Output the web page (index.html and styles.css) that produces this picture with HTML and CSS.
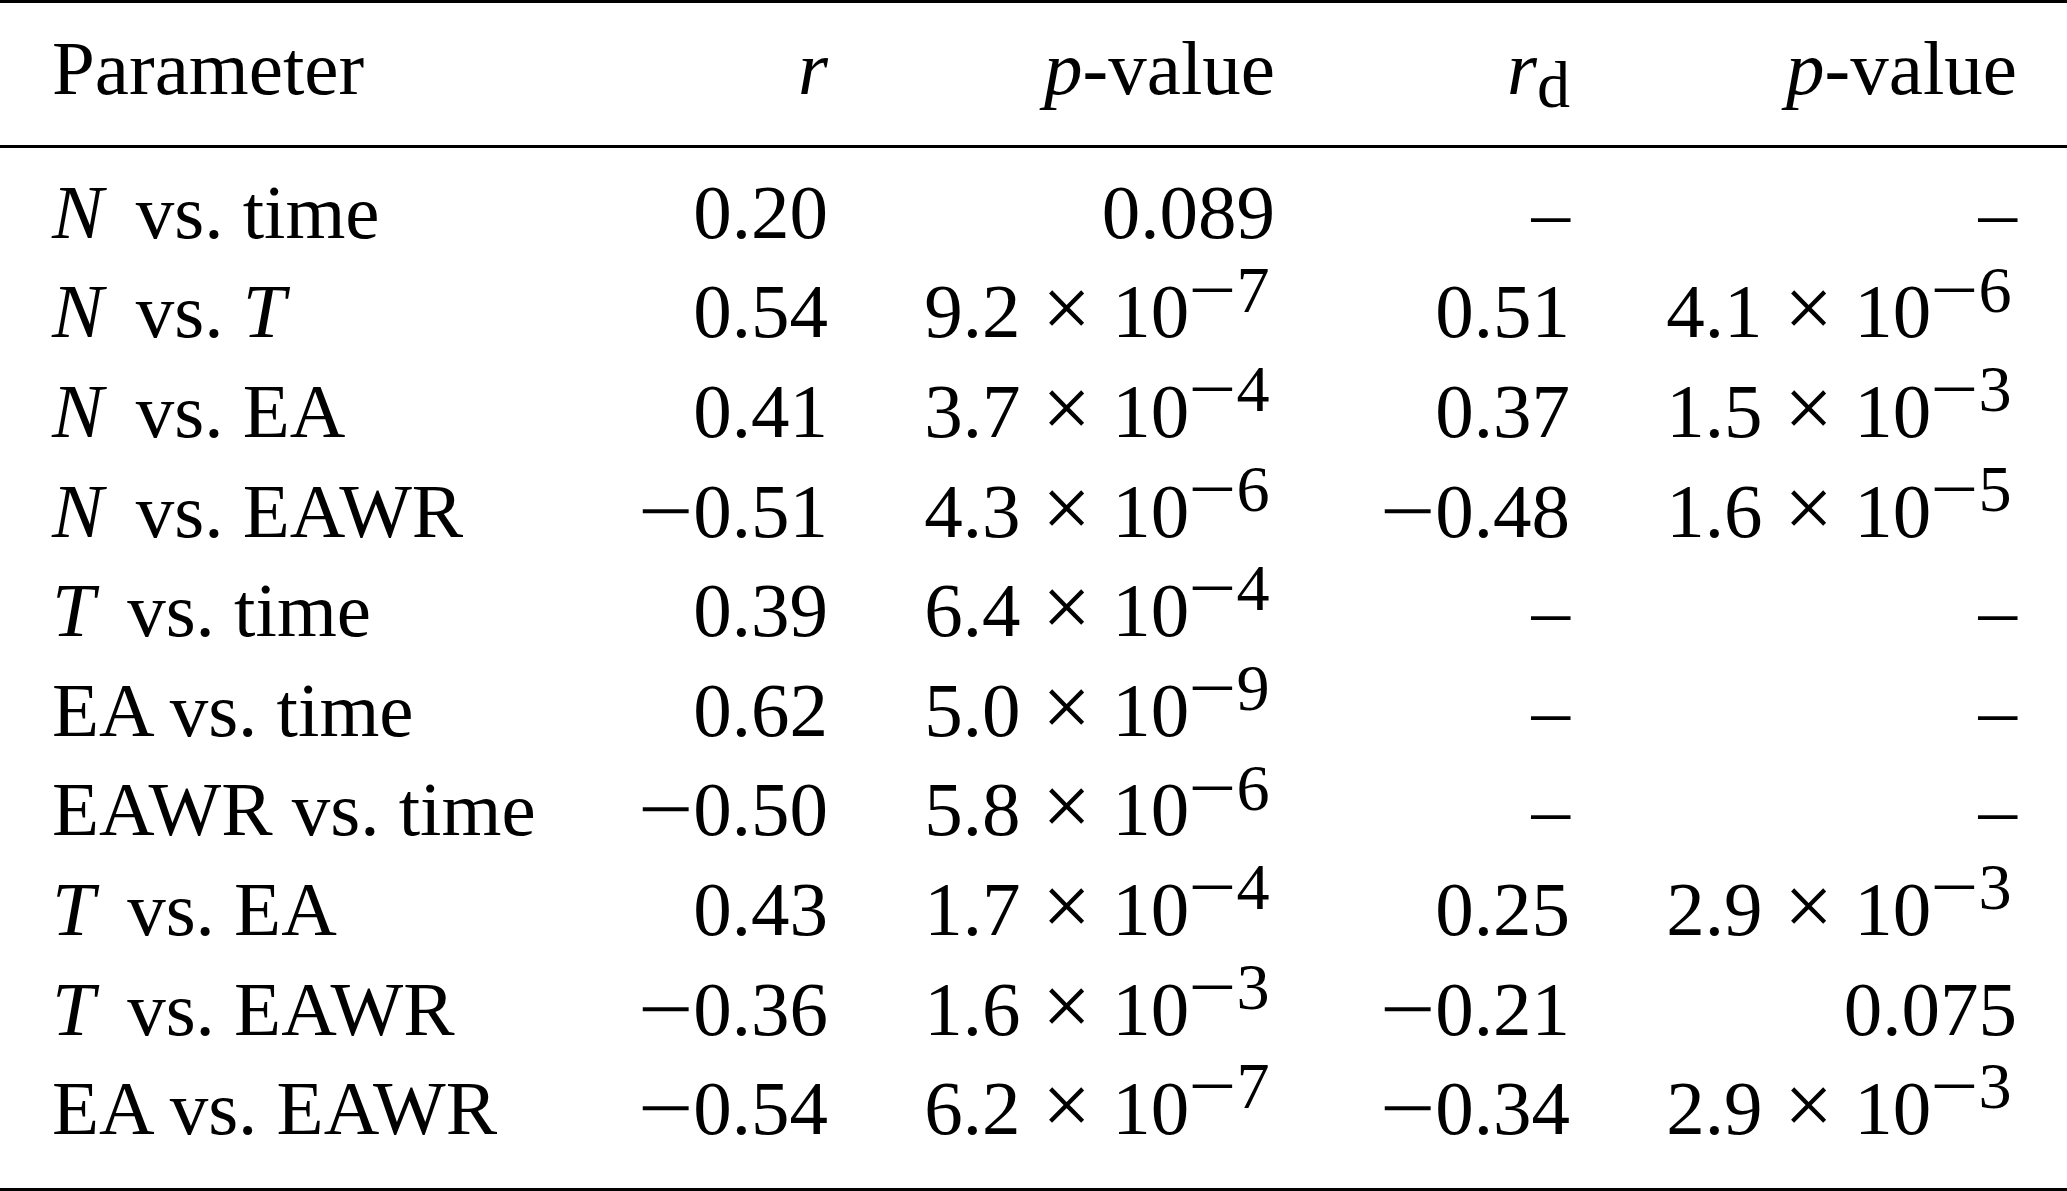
FILE: index.html
```html
<!DOCTYPE html>
<html lang="en">
<head>
<meta charset="utf-8">
<title>Correlation table</title>
<link rel="stylesheet" href="styles.css">
</head>
<body>
<table class="tbl">
  <colgroup>
    <col class="w1"><col class="w2"><col class="w3"><col class="w4"><col class="w5">
  </colgroup>
  <thead>
    <tr>
      <th class="lbl">Parameter</th>
      <th class="num"><i>r</i></th>
      <th class="num"><i>p</i>-value</th>
      <th class="num"><i>r</i><sub>d</sub></th>
      <th class="num last"><i>p</i>-value</th>
    </tr>
  </thead>
  <tbody>
    <tr>
      <td class="lbl"><i class="m">N</i>vs. time</td>
      <td class="num">0.20</td>
      <td class="num">0.089</td>
      <td class="num">–</td>
      <td class="num last">–</td>
    </tr>
    <tr>
      <td class="lbl"><i class="m">N</i>vs. <i>T</i></td>
      <td class="num">0.54</td>
      <td class="num">9.2<span class="x">×</span>10<sup><span class="neg">−</span>7</sup></td>
      <td class="num">0.51</td>
      <td class="num last">4.1<span class="x">×</span>10<sup><span class="neg">−</span>6</sup></td>
    </tr>
    <tr>
      <td class="lbl"><i class="m">N</i>vs. EA</td>
      <td class="num">0.41</td>
      <td class="num">3.7<span class="x">×</span>10<sup><span class="neg">−</span>4</sup></td>
      <td class="num">0.37</td>
      <td class="num last">1.5<span class="x">×</span>10<sup><span class="neg">−</span>3</sup></td>
    </tr>
    <tr>
      <td class="lbl"><i class="m">N</i>vs. EAWR</td>
      <td class="num"><span class="neg">−</span>0.51</td>
      <td class="num">4.3<span class="x">×</span>10<sup><span class="neg">−</span>6</sup></td>
      <td class="num"><span class="neg">−</span>0.48</td>
      <td class="num last">1.6<span class="x">×</span>10<sup><span class="neg">−</span>5</sup></td>
    </tr>
    <tr>
      <td class="lbl"><i class="m">T</i>vs. time</td>
      <td class="num">0.39</td>
      <td class="num">6.4<span class="x">×</span>10<sup><span class="neg">−</span>4</sup></td>
      <td class="num">–</td>
      <td class="num last">–</td>
    </tr>
    <tr>
      <td class="lbl">EA vs. time</td>
      <td class="num">0.62</td>
      <td class="num">5.0<span class="x">×</span>10<sup><span class="neg">−</span>9</sup></td>
      <td class="num">–</td>
      <td class="num last">–</td>
    </tr>
    <tr>
      <td class="lbl">EAWR vs. time</td>
      <td class="num"><span class="neg">−</span>0.50</td>
      <td class="num">5.8<span class="x">×</span>10<sup><span class="neg">−</span>6</sup></td>
      <td class="num">–</td>
      <td class="num last">–</td>
    </tr>
    <tr>
      <td class="lbl"><i class="m">T</i>vs. EA</td>
      <td class="num">0.43</td>
      <td class="num">1.7<span class="x">×</span>10<sup><span class="neg">−</span>4</sup></td>
      <td class="num">0.25</td>
      <td class="num last">2.9<span class="x">×</span>10<sup><span class="neg">−</span>3</sup></td>
    </tr>
    <tr>
      <td class="lbl"><i class="m">T</i>vs. EAWR</td>
      <td class="num"><span class="neg">−</span>0.36</td>
      <td class="num">1.6<span class="x">×</span>10<sup><span class="neg">−</span>3</sup></td>
      <td class="num"><span class="neg">−</span>0.21</td>
      <td class="num last">0.075</td>
    </tr>
    <tr>
      <td class="lbl">EA vs. EAWR</td>
      <td class="num"><span class="neg">−</span>0.54</td>
      <td class="num">6.2<span class="x">×</span>10<sup><span class="neg">−</span>7</sup></td>
      <td class="num"><span class="neg">−</span>0.34</td>
      <td class="num last">2.9<span class="x">×</span>10<sup><span class="neg">−</span>3</sup></td>
    </tr>
  </tbody>
</table>
</body>
</html>
```

FILE: styles.css
```css
html, body {
  margin: 0;
  padding: 0;
  background: #ffffff;
}

body {
  font-family: "Liberation Serif", "Times New Roman", serif;
  font-size: 77px;
  color: #000000;
}

.tbl {
  width: 2067px;
  table-layout: fixed;
  border-collapse: separate;
  border-spacing: 0;
}

.w1 { width: 560px; }
.w2 { width: 268px; }
.w3 { width: 447px; }
.w4 { width: 295px; }
.w5 { width: 497px; }

.tbl th,
.tbl td {
  font-weight: normal;
  line-height: 99.6px;
  padding: 0;
  white-space: nowrap;
  vertical-align: baseline;
}

.tbl th {
  border-top: 3px solid #000;
  border-bottom: 3px solid #000;
  padding-top: 16.2px;
  padding-bottom: 26.2px;
}

.tbl tbody tr:first-child td {
  padding-top: 14.8px;
}

.tbl tbody tr:last-child td {
  padding-bottom: 29.2px;
  border-bottom: 3px solid #000;
}

.lbl {
  text-align: left;
  padding-left: 52px !important;
}

.num {
  text-align: right;
}

.last {
  padding-right: 50px !important;
}

/* math italic variable followed by a text space */
.m {
  margin-right: 0.42em;
}

.x {
  display: inline-block;
  font-size: 1.12em;
  line-height: 0;
  margin: 0 0.25em;
}

.neg {
  display: inline-block;
  line-height: 0;
  transform: scaleX(1.28);
  transform-origin: right center;
  margin-left: 0.15em;
}

sup {
  font-size: 0.86em;
  line-height: 0;
  vertical-align: 0.39em;
  margin-right: 0.08em;
}

sub {
  font-size: 0.86em;
  line-height: 0;
  vertical-align: -0.2em;
}
```
